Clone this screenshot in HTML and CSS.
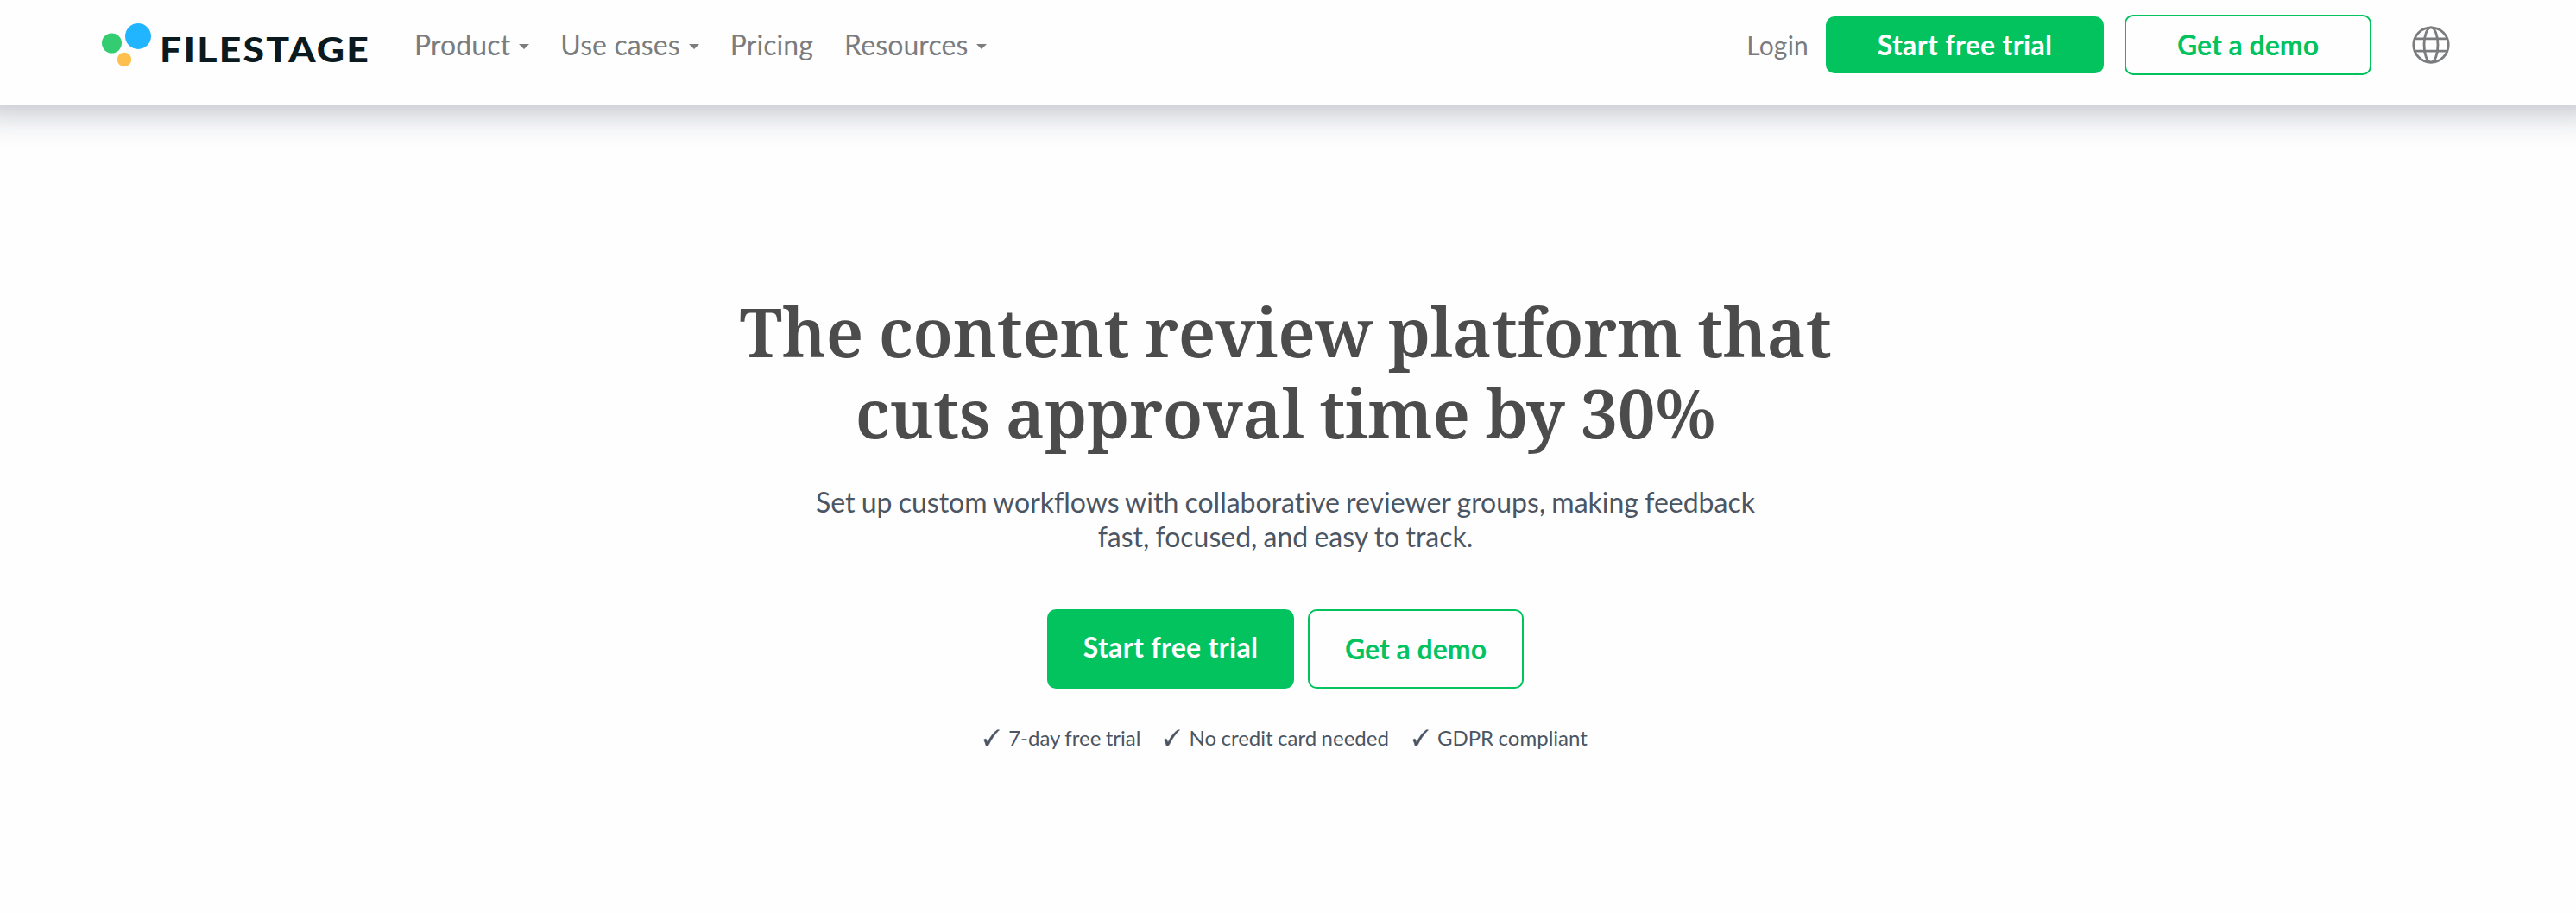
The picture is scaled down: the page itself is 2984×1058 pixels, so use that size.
FILE: index.html
```
<!DOCTYPE html>
<html lang="en">
<head>
  <meta charset="UTF-8">
  <meta name="viewport" content="width=device-width, initial-scale=1.0">
  <title>Filestage</title>
  <link rel="stylesheet" href="styles.css">
</head>
<body>
<header class="header">
  <a class="logo" href="#" aria-label="Filestage">
    <svg width="316" height="60" viewBox="0 0 316 60">
      <circle cx="11.5" cy="23" r="11.5" fill="#33cc70"/>
      <circle cx="42" cy="15" r="15" fill="#21b5ff"/>
      <circle cx="26" cy="42" r="8.2" fill="#fdc04f"/>
      <text class="logo-text" x="67" y="45" textLength="244" lengthAdjust="spacingAndGlyphs">FILESTAGE</text>
    </svg>
  </a>
  <nav class="nav">
    <a class="nav-link" href="#">Product <span class="caret"></span></a>
    <a class="nav-link" href="#">Use cases <span class="caret"></span></a>
    <a class="nav-link" href="#">Pricing</a>
    <a class="nav-link" href="#">Resources <span class="caret"></span></a>
  </nav>
  <div class="actions">
    <a class="login" href="#">Login</a>
    <a class="btn btn-primary" href="#">Start free trial</a>
    <a class="btn btn-outline" href="#">Get a demo</a>
    <svg class="globe" width="44" height="44" viewBox="0 0 44 44" fill="none" stroke="#7b7c7e" stroke-width="2.8">
      <circle cx="22" cy="22" r="20.2"/>
      <ellipse cx="22" cy="22" rx="8" ry="20.2"/>
      <path d="M3.5 14.8h37M3.5 29.2h37"/>
    </svg>
  </div>
</header>

<main class="hero">
  <h1>The content review platform that<br>cuts approval time by 30%</h1>
  <p class="lead">Set up custom workflows with collaborative reviewer groups, making feedback<br>fast, focused, and easy to track.</p>
  <div class="hero-buttons">
    <a class="btn btn-primary" href="#">Start free trial</a>
    <a class="btn btn-outline" href="#">Get a demo</a>
  </div>
  <ul class="perks">
    <li><svg class="check" width="19" height="20" viewBox="0 0 19 20"><path d="M0.5 12.2 3 11l2 4.2C8 8.8 11.8 4 16.2.8h2.3C13.2 6 9.3 11.8 6 18.6L3.3 19.5C2.7 16.6 1.7 14.2.5 12.2z"/></svg>7-day free trial</li>
    <li><svg class="check" width="19" height="20" viewBox="0 0 19 20"><path d="M0.5 12.2 3 11l2 4.2C8 8.8 11.8 4 16.2.8h2.3C13.2 6 9.3 11.8 6 18.6L3.3 19.5C2.7 16.6 1.7 14.2.5 12.2z"/></svg>No credit card needed</li>
    <li><svg class="check" width="19" height="20" viewBox="0 0 19 20"><path d="M0.5 12.2 3 11l2 4.2C8 8.8 11.8 4 16.2.8h2.3C13.2 6 9.3 11.8 6 18.6L3.3 19.5C2.7 16.6 1.7 14.2.5 12.2z"/></svg>GDPR compliant</li>
  </ul>
</main>
</body>
</html>
```
FILE: styles.css
```
body {
  margin: 0;
  background-color: #fefefe;
  font-family: Lato, sans-serif;
  color: #4b5563;
}
a {
  color: inherit;
  text-decoration: none;
}
.header {
  display: flex;
  align-items: flex-start;
  box-sizing: border-box;
  height: 122px;
  padding: 0 146px 0 118px;
  background-color: #fefefe;
  box-shadow: 0 -26px 40px 30px rgba(20, 30, 60, 0.33);
}
.logo {
  margin-top: 27px;
  height: 60px;
}
.logo-text {
  font-family: Lato, sans-serif;
  font-weight: 900;
  font-size: 40px;
  letter-spacing: 2px;
  fill: #0b1a1f;
}
.nav {
  display: flex;
  gap: 36px;
  margin: 32px 0 0 46px;
}
.nav-link {
  display: flex;
  align-items: center;
  font-size: 32px;
  line-height: 40px;
  letter-spacing: 0.1px;
  color: #7b7c7e;
}
.caret {
  margin: 3px 0 0 10px;
  border-left: 6px solid transparent;
  border-right: 6px solid transparent;
  border-top: 6px solid #7b7c7e;
}
.actions {
  display: flex;
  align-items: center;
  height: 70px;
  margin: 17px 0 0 auto;
}
.login {
  margin-right: 20px;
  font-size: 30px;
  letter-spacing: 0.2px;
  color: #7b7c7e;
}
.btn {
  box-sizing: border-box;
  border-radius: 10px;
  font-weight: 700;
  font-size: 32px;
  text-align: center;
}
.btn-primary {
  background-color: #03c35f;
  color: #fff;
  letter-spacing: 0.3px;
}
.btn-outline {
  border: 2px solid #03c35f;
  background-color: #fefefe;
  color: #03c35f;
}
.actions .btn-primary {
  width: 322px;
  height: 66px;
  line-height: 66px;
}
.actions .btn-outline {
  width: 286px;
  height: 70px;
  margin-left: 24px;
  line-height: 66px;
}
.globe {
  margin-left: 47px;
}

/* Hero */
.hero {
  display: flex;
  flex-direction: column;
  align-items: center;
  padding: 215px 6px 0 0;
}
.hero h1 {
  margin: 0;
  font-family: "Noto Serif", "DejaVu Serif", "Liberation Serif", serif;
  font-weight: 600;
  font-size: 78px;
  line-height: 94px;
  letter-spacing: -0.4px;
  word-spacing: -2px;
  text-align: center;
  color: #4c4c4c;
}
.lead {
  margin: 37px 0 0;
  font-size: 32px;
  line-height: 40px;
  text-align: center;
  word-spacing: -1px;
  font-variant-ligatures: none;
}
.hero-buttons {
  display: flex;
  gap: 16px;
  margin-top: 64px;
}
.hero-buttons .btn {
  height: 92px;
  line-height: 88px;
}
.hero-buttons .btn-primary {
  width: 286px;
}
.hero-buttons .btn-outline {
  width: 250px;
}
.perks {
  display: flex;
  gap: 27px;
  margin: 41px 0 0;
  padding: 0;
  list-style: none;
  font-size: 24px;
  line-height: 32px;
  word-spacing: -0.7px;
}
.perks li {
  display: flex;
  align-items: center;
}
.check {
  margin: 0 10px 1px 0;
  fill: #4b5563;
  stroke: #4b5563;
  stroke-width: 0.6;
}
```
